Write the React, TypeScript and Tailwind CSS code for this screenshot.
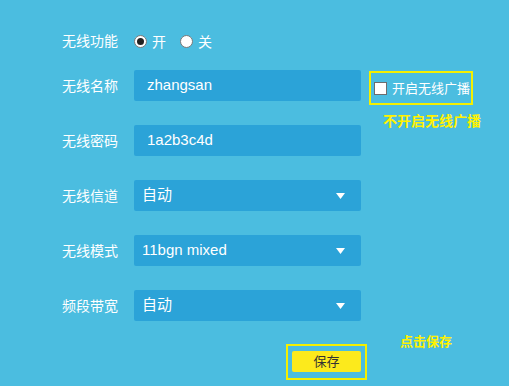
import React from "react";

const cjk = "font-['Microsoft_YaHei','Noto_Sans_CJK_SC',sans-serif]";

function Label({ text }: { text: string }) {
  return (
    <div className={`w-[72px] shrink-0 text-[14px] text-white ${cjk}`}>{text}</div>
  );
}

function TextInput({ value }: { value: string }) {
  return (
    <div className="w-[227px] h-[31px] rounded-[2px] bg-[#2ba3d8] flex items-center pl-[13px] text-[15px] text-white font-['Liberation_Sans','Noto_Sans_CJK_SC',sans-serif]">
      {value}
    </div>
  );
}

function Select({ value }: { value: string }) {
  return (
    <div className="w-[227px] h-[31px] rounded-[2px] bg-[#2ba3d8] flex items-center justify-between pl-[8px] pr-[16px] text-[15px] text-white font-['Liberation_Sans','Noto_Sans_CJK_SC',sans-serif]">
      <span>{value}</span>
      <svg width="9" height="6" viewBox="0 0 9 6">
        <polygon points="0,0 9,0 4.5,6" fill="#ffffff" />
      </svg>
    </div>
  );
}

function Radio({ checked, label }: { checked?: boolean; label: string }) {
  return (
    <div className="flex items-center">
      <div className="w-[13px] h-[13px] rounded-full bg-white border border-[#7a7a7a] flex items-center justify-center">
        {checked && <div className="w-[7px] h-[7px] rounded-full bg-[#222]" />}
      </div>
      <span className={`ml-[5px] text-[14px] text-white ${cjk}`}>{label}</span>
    </div>
  );
}

export default function App() {
  return (
    <div className="relative w-[509px] h-[386px] bg-[#4bbde0] overflow-hidden">
      <div className="flex flex-col pl-[62px] pt-[25px]">
        <div className="flex items-center h-[31px]">
          <Label text="无线功能" />
          <div className="flex items-center gap-[14px] pt-[1px]">
            <Radio checked label="开" />
            <Radio label="关" />
          </div>
        </div>

        <div className="flex items-center h-[31px] mt-[14px]">
          <Label text="无线名称" />
          <TextInput value="zhangsan" />
          <div className="self-start mt-[1px] ml-[8px] w-[104px] h-[34px] border-2 border-[#f5ef00] flex items-center pl-[3px]">
            <div className="w-[13px] h-[13px] bg-white border border-[#6d6d6d]" />
            <span className={`ml-[5px] text-[13px] text-white ${cjk}`}>开启无线广播</span>
          </div>
        </div>

        <div className="flex items-center h-[31px] mt-[24px]">
          <Label text="无线密码" />
          <TextInput value="1a2b3c4d" />
        </div>

        <div className="flex items-center h-[31px] mt-[24px]">
          <Label text="无线信道" />
          <Select value="自动" />
        </div>

        <div className="flex items-center h-[31px] mt-[24px]">
          <Label text="无线模式" />
          <Select value="11bgn mixed" />
        </div>

        <div className="flex items-center h-[31px] mt-[24px]">
          <Label text="频段带宽" />
          <Select value="自动" />
        </div>

        <div className="ml-[224px] mt-[23px] w-[81px] h-[36px] border-2 border-[#f5ef00] flex items-center justify-center pb-[2px]">
          <div className={`w-[69px] h-[21px] rounded-[2px] bg-[#fcea1c] flex items-center justify-center text-[13px] text-[#333] ${cjk}`}>
            保存
          </div>
        </div>
      </div>

      <div className={`absolute left-[383px] top-[111px] text-[14px] font-bold text-[#fff200] leading-[18px] ${cjk}`}>
        不开启无线广播
      </div>
      <div className={`absolute left-[400px] top-[332px] text-[13px] font-bold text-[#fff200] leading-[18px] ${cjk}`}>
        点击保存
      </div>
    </div>
  );
}
